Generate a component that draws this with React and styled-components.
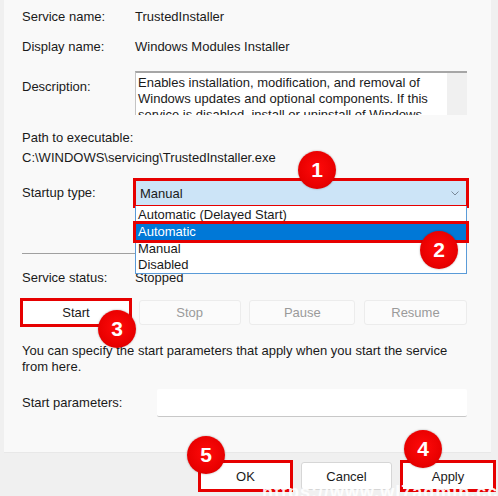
import React from "react";
import styled, { createGlobalStyle, css } from "styled-components";

const Global = createGlobalStyle`
  html, body { margin: 0; padding: 0; background: #f0f0f0; }
  body { font-family: "Liberation Sans", Arial, sans-serif; font-size: 13px; color: #1a1a1a; }
`;

const RED = "#e60000";

const redBox = css`
  outline: 3px solid ${RED};
  outline-offset: -1px;
`;

const Page = styled.div`
  position: relative;
  width: 498px;
  height: 496px;
  overflow: hidden;
  background: #f0f0f0;
`;

const Panel = styled.div`
  margin-left: 4px;
  width: 487px;
  height: 453px;
  box-sizing: border-box;
  padding: 2px 24px 0 18px;
  background: #f9f9f9;
  border-bottom: 1px solid #e8e8e8;
  display: flex;
  flex-direction: column;
`;

const Row = styled.div`
  display: grid;
  grid-template-columns: ${(p) => p.$label || 113}px 1fr;
  align-items: ${(p) => p.$align || "center"};
  height: ${(p) => p.$h}px;
  margin-top: ${(p) => p.$mt || 0}px;
  position: relative;
`;

const Label = styled.div`
  line-height: 16px;
  padding-top: ${(p) => p.$pt || 0}px;
  white-space: nowrap;
`;

const Value = styled.div`
  line-height: 16px;
  white-space: nowrap;
`;

const DescBox = styled.div`
  height: 44px;
  box-sizing: border-box;
  background: #ffffff;
  border-top: 2px solid #a6a6a6;
  border-left: 1px solid #c4c4c4;
  display: flex;
  overflow: hidden;
`;

const DescText = styled.div`
  flex: 1;
  padding: 2px 0 0 2px;
  line-height: 16px;
`;

const ScrollTrack = styled.div`
  width: 20px;
  background: #f0f0f0;
`;

const Block = styled.div`
  margin-top: ${(p) => p.$mt || 0}px;
  line-height: ${(p) => p.$lh || 20}px;
`;

const ComboWrap = styled.div`
  position: relative;
  height: 26px;
`;

const Combo = styled.div`
  height: 26px;
  box-sizing: border-box;
  background: #cce4f7;
  display: flex;
  align-items: center;
  justify-content: space-between;
  padding: 0 8px 0 5px;
  ${redBox}
`;

const DropList = styled.div`
  position: absolute;
  left: 0;
  right: 0;
  top: 26px;
  height: 68px;
  box-sizing: border-box;
  background: #ffffff;
  border: 1px solid #5a9bd8;
  border-top: none;
  padding-top: 1px;
  z-index: 3;
`;

const Option = styled.div`
  height: 16px;
  line-height: 16px;
  padding-left: 2px;
  box-sizing: border-box;
  ${(p) =>
    p.$selected &&
    css`
      background: #0078d7;
      color: #ffffff;
      height: 18px;
      line-height: 17px;
      ${redBox}
      margin: 0 -1px;
      padding-left: 3px;
    `}
`;

const Separator = styled.div`
  height: 1px;
  background: #a0a0a0;
  margin-top: ${(p) => p.$mt}px;
`;

const ButtonRow = styled.div`
  display: flex;
  gap: ${(p) => p.$gap || 0}px;
  margin-top: ${(p) => p.$mt || 0}px;
  justify-content: ${(p) => p.$justify || "flex-start"};
  padding-right: ${(p) => p.$pr || 0}px;
`;

const Btn = styled.div`
  width: ${(p) => p.$w}px;
  height: ${(p) => p.$h || 25}px;
  box-sizing: border-box;
  display: flex;
  align-items: center;
  justify-content: center;
  background: ${(p) => (p.$disabled ? "#fbfbfb" : "#ffffff")};
  color: ${(p) => (p.$disabled ? "#9a9a9a" : "#1a1a1a")};
  border: 1px solid ${(p) => (p.$disabled ? "#ececec" : "#d6d6d6")};
  border-radius: 3px;
  ${(p) => p.$hl && redBox}
  ${(p) => p.$hl && css`border-radius: 0; border-color: transparent;`}
`;

const Input = styled.div`
  height: 28px;
  box-sizing: border-box;
  background: #ffffff;
  border-bottom: 1px solid #c8c8c8;
  border-radius: 2px;
`;

const Footer = styled.div`
  margin-top: 9px;
`;

const Badge = styled.div`
  position: absolute;
  left: ${(p) => p.$x - 19}px;
  top: ${(p) => p.$y - 19}px;
  width: 38px;
  height: 38px;
  border-radius: 50%;
  background: radial-gradient(circle at 50% 45%, #ff0a0a 0%, #e80000 65%, #c00000 100%);
  box-shadow: 0 0 2px rgba(0, 0, 0, 0.35);
  color: #ffffff;
  font-family: "Liberation Sans", Arial, sans-serif;
  font-weight: 700;
  font-size: 21px;
  display: flex;
  align-items: center;
  justify-content: center;
  z-index: 5;
`;

const Watermark = styled.div`
  position: absolute;
  left: 262px;
  top: 482px;
  color: rgba(255, 255, 255, 0.92);
  font-family: "Liberation Sans", Arial, sans-serif;
  font-weight: 700;
  font-size: 18px;
  letter-spacing: 1px;
  white-space: nowrap;
  z-index: 6;
`;

const Chevron = () => (
  <svg width="8" height="5" viewBox="0 0 8 5">
    <path d="M0.5 0.5 L4 4 L7.5 0.5" fill="none" stroke="#7a8a99" strokeWidth="1" />
  </svg>
);

export default function App() {
  return (
    <Page>
      <Global />
      <Panel>
        <Row $h={30}>
          <Label>Service name:</Label>
          <Value>TrustedInstaller</Value>
        </Row>
        <Row $h={30}>
          <Label>Display name:</Label>
          <Value>Windows Modules Installer</Value>
        </Row>
        <Row $h={44} $mt={9} $align="start">
          <Label $pt={8}>Description:</Label>
          <DescBox>
            <DescText>
              Enables installation, modification, and removal of
              <br />
              Windows updates and optional components. If this
              <br />
              service is disabled, install or uninstall of Windows
            </DescText>
            <ScrollTrack />
          </DescBox>
        </Row>
        <Block $mt={13}>
          Path to executable:
          <br />
          C:\WINDOWS\servicing\TrustedInstaller.exe
        </Block>
        <Row $h={26} $mt={12}>
          <Label>Startup type:</Label>
          <ComboWrap>
            <Combo>
              <span>Manual</span>
              <Chevron />
            </Combo>
            <DropList>
              <Option>Automatic (Delayed Start)</Option>
              <Option $selected>Automatic</Option>
              <Option>Manual</Option>
              <Option>Disabled</Option>
            </DropList>
          </ComboWrap>
        </Row>
        <Separator $mt={47} />
        <Row $h={20} $mt={14}>
          <Label>Service status:</Label>
          <Value>Stopped</Value>
        </Row>
        <ButtonRow $mt={12} $justify="space-between">
          <Btn $w={108} $hl>Start</Btn>
          <Btn $w={102} $disabled>Stop</Btn>
          <Btn $w={106} $disabled>Pause</Btn>
          <Btn $w={103} $disabled>Resume</Btn>
        </ButtonRow>
        <Block $mt={18} $lh={16}>
          You can specify the start parameters that apply when you start the service
          <br />
          from here.
        </Block>
        <Row $h={28} $mt={14} $label={135}>
          <Label>Start parameters:</Label>
          <Input />
        </Row>
      </Panel>
      <Footer>
        <ButtonRow $justify="flex-end" $pr={4} $gap={10}>
          <Btn $w={91} $h={28} $hl>OK</Btn>
          <Btn $w={91} $h={28}>Cancel</Btn>
          <Btn $w={92} $h={28} $hl>Apply</Btn>
        </ButtonRow>
      </Footer>
      <Badge $x={317} $y={170}>1</Badge>
      <Badge $x={439} $y={250}>2</Badge>
      <Badge $x={117} $y={329}>3</Badge>
      <Badge $x={423} $y={449}>4</Badge>
      <Badge $x={206} $y={455}>5</Badge>
      <Watermark>https://www.wl7admin.cc</Watermark>
    </Page>
  );
}
